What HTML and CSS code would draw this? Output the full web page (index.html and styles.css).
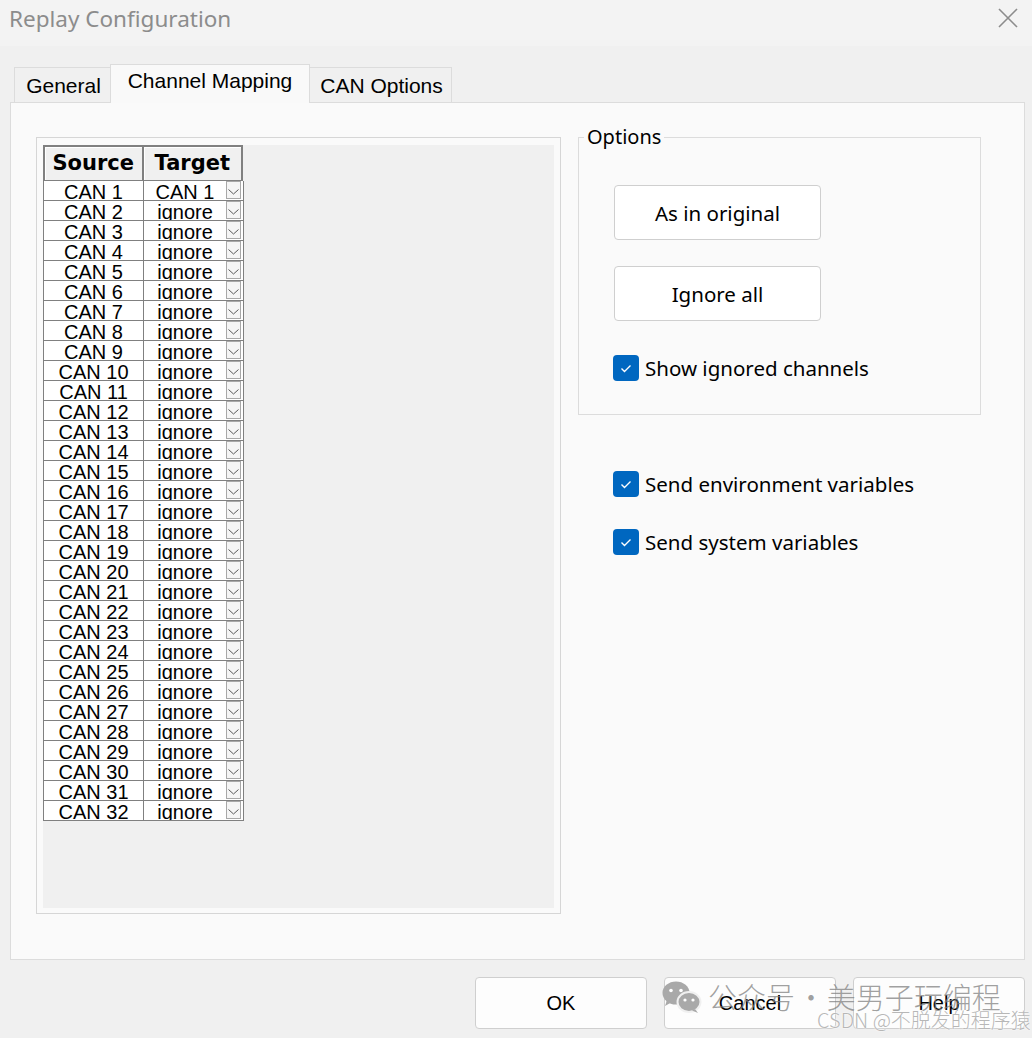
FILE: index.html
```html
<!DOCTYPE html>
<html>
<head>
<meta charset="utf-8">
<title>Replay Configuration</title>
<link rel="stylesheet" href="styles.css">
</head>
<body>
<div class="window">
  <div class="titlebar">
    <span class="title">Replay Configuration</span>
    <svg class="close" width="20" height="20" viewBox="0 0 20 20"><path d="M1 1 L19 19 M19 1 L1 19" stroke="#8c8c8c" stroke-width="1.6" fill="none"/></svg>
  </div>
  <div class="tabs">
    <div class="tab tab-general">General</div>
    <div class="tab tab-active">Channel Mapping</div>
    <div class="tab tab-can">CAN Options</div>
  </div>
  <div class="panel">
    <div class="mapping-box">
      <div class="grid-area">
        <div class="grid">
          <div class="grid-head">
            <div class="hcell hcell-src">Source</div>
            <div class="hcell hcell-tgt">Target</div>
          </div>
          <div class="row"><div class="src">CAN 1</div><div class="tgt"><span class="tgt-text">CAN 1</span><span class="arrow"><svg width="13" height="15" viewBox="0 0 13 15"><path d="M1.5 7.5 L6.5 12 L11.5 7.5" stroke="#5a5a5a" stroke-width="1" fill="none"/></svg></span></div></div>
          <div class="row"><div class="src">CAN 2</div><div class="tgt"><span class="tgt-text">ignore</span><span class="arrow"><svg width="13" height="15" viewBox="0 0 13 15"><path d="M1.5 7.5 L6.5 12 L11.5 7.5" stroke="#5a5a5a" stroke-width="1" fill="none"/></svg></span></div></div>
          <div class="row"><div class="src">CAN 3</div><div class="tgt"><span class="tgt-text">ignore</span><span class="arrow"><svg width="13" height="15" viewBox="0 0 13 15"><path d="M1.5 7.5 L6.5 12 L11.5 7.5" stroke="#5a5a5a" stroke-width="1" fill="none"/></svg></span></div></div>
          <div class="row"><div class="src">CAN 4</div><div class="tgt"><span class="tgt-text">ignore</span><span class="arrow"><svg width="13" height="15" viewBox="0 0 13 15"><path d="M1.5 7.5 L6.5 12 L11.5 7.5" stroke="#5a5a5a" stroke-width="1" fill="none"/></svg></span></div></div>
          <div class="row"><div class="src">CAN 5</div><div class="tgt"><span class="tgt-text">ignore</span><span class="arrow"><svg width="13" height="15" viewBox="0 0 13 15"><path d="M1.5 7.5 L6.5 12 L11.5 7.5" stroke="#5a5a5a" stroke-width="1" fill="none"/></svg></span></div></div>
          <div class="row"><div class="src">CAN 6</div><div class="tgt"><span class="tgt-text">ignore</span><span class="arrow"><svg width="13" height="15" viewBox="0 0 13 15"><path d="M1.5 7.5 L6.5 12 L11.5 7.5" stroke="#5a5a5a" stroke-width="1" fill="none"/></svg></span></div></div>
          <div class="row"><div class="src">CAN 7</div><div class="tgt"><span class="tgt-text">ignore</span><span class="arrow"><svg width="13" height="15" viewBox="0 0 13 15"><path d="M1.5 7.5 L6.5 12 L11.5 7.5" stroke="#5a5a5a" stroke-width="1" fill="none"/></svg></span></div></div>
          <div class="row"><div class="src">CAN 8</div><div class="tgt"><span class="tgt-text">ignore</span><span class="arrow"><svg width="13" height="15" viewBox="0 0 13 15"><path d="M1.5 7.5 L6.5 12 L11.5 7.5" stroke="#5a5a5a" stroke-width="1" fill="none"/></svg></span></div></div>
          <div class="row"><div class="src">CAN 9</div><div class="tgt"><span class="tgt-text">ignore</span><span class="arrow"><svg width="13" height="15" viewBox="0 0 13 15"><path d="M1.5 7.5 L6.5 12 L11.5 7.5" stroke="#5a5a5a" stroke-width="1" fill="none"/></svg></span></div></div>
          <div class="row"><div class="src">CAN 10</div><div class="tgt"><span class="tgt-text">ignore</span><span class="arrow"><svg width="13" height="15" viewBox="0 0 13 15"><path d="M1.5 7.5 L6.5 12 L11.5 7.5" stroke="#5a5a5a" stroke-width="1" fill="none"/></svg></span></div></div>
          <div class="row"><div class="src">CAN 11</div><div class="tgt"><span class="tgt-text">ignore</span><span class="arrow"><svg width="13" height="15" viewBox="0 0 13 15"><path d="M1.5 7.5 L6.5 12 L11.5 7.5" stroke="#5a5a5a" stroke-width="1" fill="none"/></svg></span></div></div>
          <div class="row"><div class="src">CAN 12</div><div class="tgt"><span class="tgt-text">ignore</span><span class="arrow"><svg width="13" height="15" viewBox="0 0 13 15"><path d="M1.5 7.5 L6.5 12 L11.5 7.5" stroke="#5a5a5a" stroke-width="1" fill="none"/></svg></span></div></div>
          <div class="row"><div class="src">CAN 13</div><div class="tgt"><span class="tgt-text">ignore</span><span class="arrow"><svg width="13" height="15" viewBox="0 0 13 15"><path d="M1.5 7.5 L6.5 12 L11.5 7.5" stroke="#5a5a5a" stroke-width="1" fill="none"/></svg></span></div></div>
          <div class="row"><div class="src">CAN 14</div><div class="tgt"><span class="tgt-text">ignore</span><span class="arrow"><svg width="13" height="15" viewBox="0 0 13 15"><path d="M1.5 7.5 L6.5 12 L11.5 7.5" stroke="#5a5a5a" stroke-width="1" fill="none"/></svg></span></div></div>
          <div class="row"><div class="src">CAN 15</div><div class="tgt"><span class="tgt-text">ignore</span><span class="arrow"><svg width="13" height="15" viewBox="0 0 13 15"><path d="M1.5 7.5 L6.5 12 L11.5 7.5" stroke="#5a5a5a" stroke-width="1" fill="none"/></svg></span></div></div>
          <div class="row"><div class="src">CAN 16</div><div class="tgt"><span class="tgt-text">ignore</span><span class="arrow"><svg width="13" height="15" viewBox="0 0 13 15"><path d="M1.5 7.5 L6.5 12 L11.5 7.5" stroke="#5a5a5a" stroke-width="1" fill="none"/></svg></span></div></div>
          <div class="row"><div class="src">CAN 17</div><div class="tgt"><span class="tgt-text">ignore</span><span class="arrow"><svg width="13" height="15" viewBox="0 0 13 15"><path d="M1.5 7.5 L6.5 12 L11.5 7.5" stroke="#5a5a5a" stroke-width="1" fill="none"/></svg></span></div></div>
          <div class="row"><div class="src">CAN 18</div><div class="tgt"><span class="tgt-text">ignore</span><span class="arrow"><svg width="13" height="15" viewBox="0 0 13 15"><path d="M1.5 7.5 L6.5 12 L11.5 7.5" stroke="#5a5a5a" stroke-width="1" fill="none"/></svg></span></div></div>
          <div class="row"><div class="src">CAN 19</div><div class="tgt"><span class="tgt-text">ignore</span><span class="arrow"><svg width="13" height="15" viewBox="0 0 13 15"><path d="M1.5 7.5 L6.5 12 L11.5 7.5" stroke="#5a5a5a" stroke-width="1" fill="none"/></svg></span></div></div>
          <div class="row"><div class="src">CAN 20</div><div class="tgt"><span class="tgt-text">ignore</span><span class="arrow"><svg width="13" height="15" viewBox="0 0 13 15"><path d="M1.5 7.5 L6.5 12 L11.5 7.5" stroke="#5a5a5a" stroke-width="1" fill="none"/></svg></span></div></div>
          <div class="row"><div class="src">CAN 21</div><div class="tgt"><span class="tgt-text">ignore</span><span class="arrow"><svg width="13" height="15" viewBox="0 0 13 15"><path d="M1.5 7.5 L6.5 12 L11.5 7.5" stroke="#5a5a5a" stroke-width="1" fill="none"/></svg></span></div></div>
          <div class="row"><div class="src">CAN 22</div><div class="tgt"><span class="tgt-text">ignore</span><span class="arrow"><svg width="13" height="15" viewBox="0 0 13 15"><path d="M1.5 7.5 L6.5 12 L11.5 7.5" stroke="#5a5a5a" stroke-width="1" fill="none"/></svg></span></div></div>
          <div class="row"><div class="src">CAN 23</div><div class="tgt"><span class="tgt-text">ignore</span><span class="arrow"><svg width="13" height="15" viewBox="0 0 13 15"><path d="M1.5 7.5 L6.5 12 L11.5 7.5" stroke="#5a5a5a" stroke-width="1" fill="none"/></svg></span></div></div>
          <div class="row"><div class="src">CAN 24</div><div class="tgt"><span class="tgt-text">ignore</span><span class="arrow"><svg width="13" height="15" viewBox="0 0 13 15"><path d="M1.5 7.5 L6.5 12 L11.5 7.5" stroke="#5a5a5a" stroke-width="1" fill="none"/></svg></span></div></div>
          <div class="row"><div class="src">CAN 25</div><div class="tgt"><span class="tgt-text">ignore</span><span class="arrow"><svg width="13" height="15" viewBox="0 0 13 15"><path d="M1.5 7.5 L6.5 12 L11.5 7.5" stroke="#5a5a5a" stroke-width="1" fill="none"/></svg></span></div></div>
          <div class="row"><div class="src">CAN 26</div><div class="tgt"><span class="tgt-text">ignore</span><span class="arrow"><svg width="13" height="15" viewBox="0 0 13 15"><path d="M1.5 7.5 L6.5 12 L11.5 7.5" stroke="#5a5a5a" stroke-width="1" fill="none"/></svg></span></div></div>
          <div class="row"><div class="src">CAN 27</div><div class="tgt"><span class="tgt-text">ignore</span><span class="arrow"><svg width="13" height="15" viewBox="0 0 13 15"><path d="M1.5 7.5 L6.5 12 L11.5 7.5" stroke="#5a5a5a" stroke-width="1" fill="none"/></svg></span></div></div>
          <div class="row"><div class="src">CAN 28</div><div class="tgt"><span class="tgt-text">ignore</span><span class="arrow"><svg width="13" height="15" viewBox="0 0 13 15"><path d="M1.5 7.5 L6.5 12 L11.5 7.5" stroke="#5a5a5a" stroke-width="1" fill="none"/></svg></span></div></div>
          <div class="row"><div class="src">CAN 29</div><div class="tgt"><span class="tgt-text">ignore</span><span class="arrow"><svg width="13" height="15" viewBox="0 0 13 15"><path d="M1.5 7.5 L6.5 12 L11.5 7.5" stroke="#5a5a5a" stroke-width="1" fill="none"/></svg></span></div></div>
          <div class="row"><div class="src">CAN 30</div><div class="tgt"><span class="tgt-text">ignore</span><span class="arrow"><svg width="13" height="15" viewBox="0 0 13 15"><path d="M1.5 7.5 L6.5 12 L11.5 7.5" stroke="#5a5a5a" stroke-width="1" fill="none"/></svg></span></div></div>
          <div class="row"><div class="src">CAN 31</div><div class="tgt"><span class="tgt-text">ignore</span><span class="arrow"><svg width="13" height="15" viewBox="0 0 13 15"><path d="M1.5 7.5 L6.5 12 L11.5 7.5" stroke="#5a5a5a" stroke-width="1" fill="none"/></svg></span></div></div>
          <div class="row"><div class="src">CAN 32</div><div class="tgt"><span class="tgt-text">ignore</span><span class="arrow"><svg width="13" height="15" viewBox="0 0 13 15"><path d="M1.5 7.5 L6.5 12 L11.5 7.5" stroke="#5a5a5a" stroke-width="1" fill="none"/></svg></span></div></div>
        </div>
      </div>
    </div>
    <div class="right-col">
      <div class="group">
        <div class="group-label">Options</div>
        <button class="btn btn-first">As in original</button>
        <button class="btn btn-second">Ignore all</button>
        <label class="check check-in-group"><span class="box"><svg width="26" height="26" viewBox="0 0 26 26"><path d="M8.5 13.5 L11.5 16.5 L17.5 10.5" stroke="#fff" stroke-width="1.4" fill="none"/></svg></span><span class="check-text">Show ignored channels</span></label>
      </div>
      <label class="check check-env"><span class="box"><svg width="26" height="26" viewBox="0 0 26 26"><path d="M8.5 13.5 L11.5 16.5 L17.5 10.5" stroke="#fff" stroke-width="1.4" fill="none"/></svg></span><span class="check-text">Send environment variables</span></label>
      <label class="check check-sys"><span class="box"><svg width="26" height="26" viewBox="0 0 26 26"><path d="M8.5 13.5 L11.5 16.5 L17.5 10.5" stroke="#fff" stroke-width="1.4" fill="none"/></svg></span><span class="check-text">Send system variables</span></label>
    </div>
  </div>
  <div class="footer">
    <button class="fbtn">OK</button>
    <button class="fbtn">Cancel</button>
    <button class="fbtn">Help</button>
  </div>
  <div class="watermark">
    <svg class="wm-icon" width="40" height="32" viewBox="0 0 40 32">
      <ellipse cx="14" cy="12" rx="13.5" ry="11.5" fill="#a9a9a9"/>
      <path d="M5 19 L3 25 L10 21 Z" fill="#a9a9a9"/>
      <circle cx="9" cy="9.5" r="1.8" fill="#fff"/>
      <circle cx="19" cy="9.5" r="1.8" fill="#fff"/>
      <ellipse cx="27" cy="21" rx="11.5" ry="10" fill="#a9a9a9" stroke="#f0f0f0" stroke-width="2"/>
      <path d="M33 28 L36 32 L30 29.5 Z" fill="#a9a9a9"/>
      <circle cx="23" cy="19" r="1.6" fill="#fff"/>
      <circle cx="31" cy="19" r="1.6" fill="#fff"/>
    </svg>
    <span class="wm-text">公众号 · 美男子玩编程</span>
    <span class="wm-csdn">CSDN @不脱发的程序猿</span>
  </div>
</div>
</body>
</html>
```
FILE: styles.css
```css
html, body {
  margin: 0;
  padding: 0;
}
body {
  width: 1032px;
  height: 1038px;
  background: #f0f0f0;
  overflow: hidden;
  font-family: "Liberation Sans", Arial, sans-serif;
}
.window {
  position: relative;
  width: 1032px;
  height: 1038px;
}
.titlebar {
  height: 46px;
  background: #f3f3f3;
  display: flex;
  justify-content: space-between;
  align-items: flex-start;
  padding: 0 14px 0 9px;
  box-sizing: border-box;
}
.title {
  font-family: "Noto Sans", "Open Sans", sans-serif;
  font-size: 22.5px;
  line-height: 30px;
  padding-top: 4px;
  color: #8c8c8c;
}
.close {
  margin-top: 8px;
}
.tabs {
  margin-top: 18px;
  height: 38px;
  display: flex;
  align-items: flex-end;
  padding-left: 14px;
}
.tab {
  box-sizing: border-box;
  height: 35px;
  border: 1px solid #dcdcdc;
  border-bottom: none;
  background: #f0f0f0;
  font-size: 21px;
  line-height: 24px;
  padding-top: 6px;
  text-align: center;
  color: #000;
  white-space: nowrap;
}
.tab-general { width: 97px; padding-left: 2px; }
.tab-active {
  width: 200px;
  height: 39px;
  margin-bottom: -1px;
  margin-left: -1px;
  padding-top: 4px;
  background: #f9f9f9;
  position: relative;
  z-index: 1;
}
.tab-can {
  width: 143px;
  margin-left: -1px;
  padding-left: 2px;
}
.panel {
  margin-left: 10px;
  width: 1015px;
  height: 858px;
  box-sizing: border-box;
  border: 1px solid #dcdcdc;
  background: #fafafa;
  display: flex;
  align-items: flex-start;
  gap: 17px;
  padding: 34px 0 0 25px;
}
.mapping-box {
  width: 525px;
  height: 777px;
  box-sizing: border-box;
  border: 1px solid #d6d6d6;
  padding: 7px 6px 5px 6px;
}
.grid-area {
  width: 100%;
  height: 100%;
  background: #f0f0f0;
}
.grid {
  width: 200px;
}
.grid-head {
  display: flex;
  height: 36px;
  box-sizing: border-box;
  border-top: 2px solid #808080;
  border-left: 2px solid #808080;
  border-bottom: 1px solid #808080;
}
.hcell {
  box-sizing: border-box;
  height: 33px;
  border-right: 2px solid #808080;
  font-family: "DejaVu Sans", sans-serif;
  font-weight: bold;
  font-size: 21px;
  line-height: 33px;
  text-align: center;
  color: #000;
  background: #f0f0f0;
  box-shadow: inset 1px 1px 0 #ffffff;
}
.hcell-src { width: 99px; }
.hcell-tgt { width: 100px; }
.row {
  display: flex;
  height: 20px;
  box-sizing: border-box;
  border-left: 1px solid #808080;
  border-bottom: 1px solid #808080;
  background: #fff;
  width: 201px;
}
.src, .tgt-text {
  font-size: 20px;
  line-height: 19px;
  height: 17px;
  padding-top: 2px;
  overflow: hidden;
  text-align: center;
  color: #000;
  white-space: nowrap;
}
.src {
  width: 99px;
  border-right: 1px solid #808080;
}
.tgt {
  width: 99px;
  display: flex;
  border-right: 1px solid #808080;
}
.tgt-text {
  width: 82px;
}
.arrow {
  width: 15px;
  height: 18px;
  box-sizing: border-box;
  border: 1px solid #a8a8a8;
  background: #f5f5f5;
  display: flex;
}
.right-col {
  display: flex;
  flex-direction: column;
  align-items: flex-start;
}
.group {
  width: 403px;
  height: 278px;
  box-sizing: border-box;
  border: 1px solid #dcdcdc;
  display: flex;
  flex-direction: column;
  align-items: flex-start;
}
.group-label {
  margin: -12px 0 0 5px;
  padding: 0 3px;
  background: #fafafa;
  font-family: "Noto Sans", "Open Sans", sans-serif;
  font-size: 20px;
  line-height: 22px;
  color: #000;
}
.btn {
  width: 207px;
  height: 55px;
  margin-left: 35px;
  box-sizing: border-box;
  border: 1px solid #cfcfcf;
  border-radius: 4px;
  background: #ffffff;
  font-family: "Noto Sans", "Open Sans", sans-serif;
  font-size: 20.5px;
  color: #000;
  padding: 0;
}
.btn-first { margin-top: 37px; }
.btn-second { margin-top: 26px; }
.check {
  display: flex;
  align-items: center;
  height: 26px;
  gap: 6px;
  font-family: "Noto Sans", "Open Sans", sans-serif;
  font-size: 20.5px;
  line-height: 26px;
  color: #000;
  margin-left: 34px;
}
.box {
  width: 26px;
  height: 26px;
  border-radius: 4px;
  background: #0067c0;
  display: flex;
  flex-shrink: 0;
}
.check-text {
  margin-top: -1px;
}
.check-in-group { margin-top: 34px; }
.check-env { margin-top: 56px; margin-left: 35px; }
.check-sys { margin-top: 32px; margin-left: 35px; }
.footer {
  margin-top: 17px;
  display: flex;
  justify-content: flex-end;
  gap: 17px;
  padding-right: 7px;
}
.fbtn {
  width: 172px;
  height: 52px;
  box-sizing: border-box;
  border: 1px solid #cfcfcf;
  border-radius: 4px;
  background: #fdfdfd;
  font-family: "Liberation Sans", Arial, sans-serif;
  font-size: 20px;
  color: #000;
  padding: 0;
}
.watermark {
  position: absolute;
  left: 662px;
  top: 978px;
  width: 370px;
  height: 60px;
  pointer-events: none;
}
.wm-icon {
  position: absolute;
  left: 0;
  top: 3px;
}
.wm-text {
  position: absolute;
  left: 46px;
  top: 0;
  font-family: "Noto Sans CJK SC", sans-serif;
  font-size: 29px;
  line-height: 36px;
  color: rgba(130, 130, 130, 0.75);
  white-space: nowrap;
  font-weight: 300;
  word-spacing: -5px;
}
.wm-csdn {
  position: absolute;
  left: 155px;
  top: 30px;
  font-family: "Noto Sans CJK SC", sans-serif;
  font-size: 20px;
  line-height: 24px;
  color: rgba(170, 170, 170, 0.85);
  white-space: nowrap;
  font-weight: 300;
  text-shadow: 0 0 2px #fff, 0 0 1px #fff;
}
```
